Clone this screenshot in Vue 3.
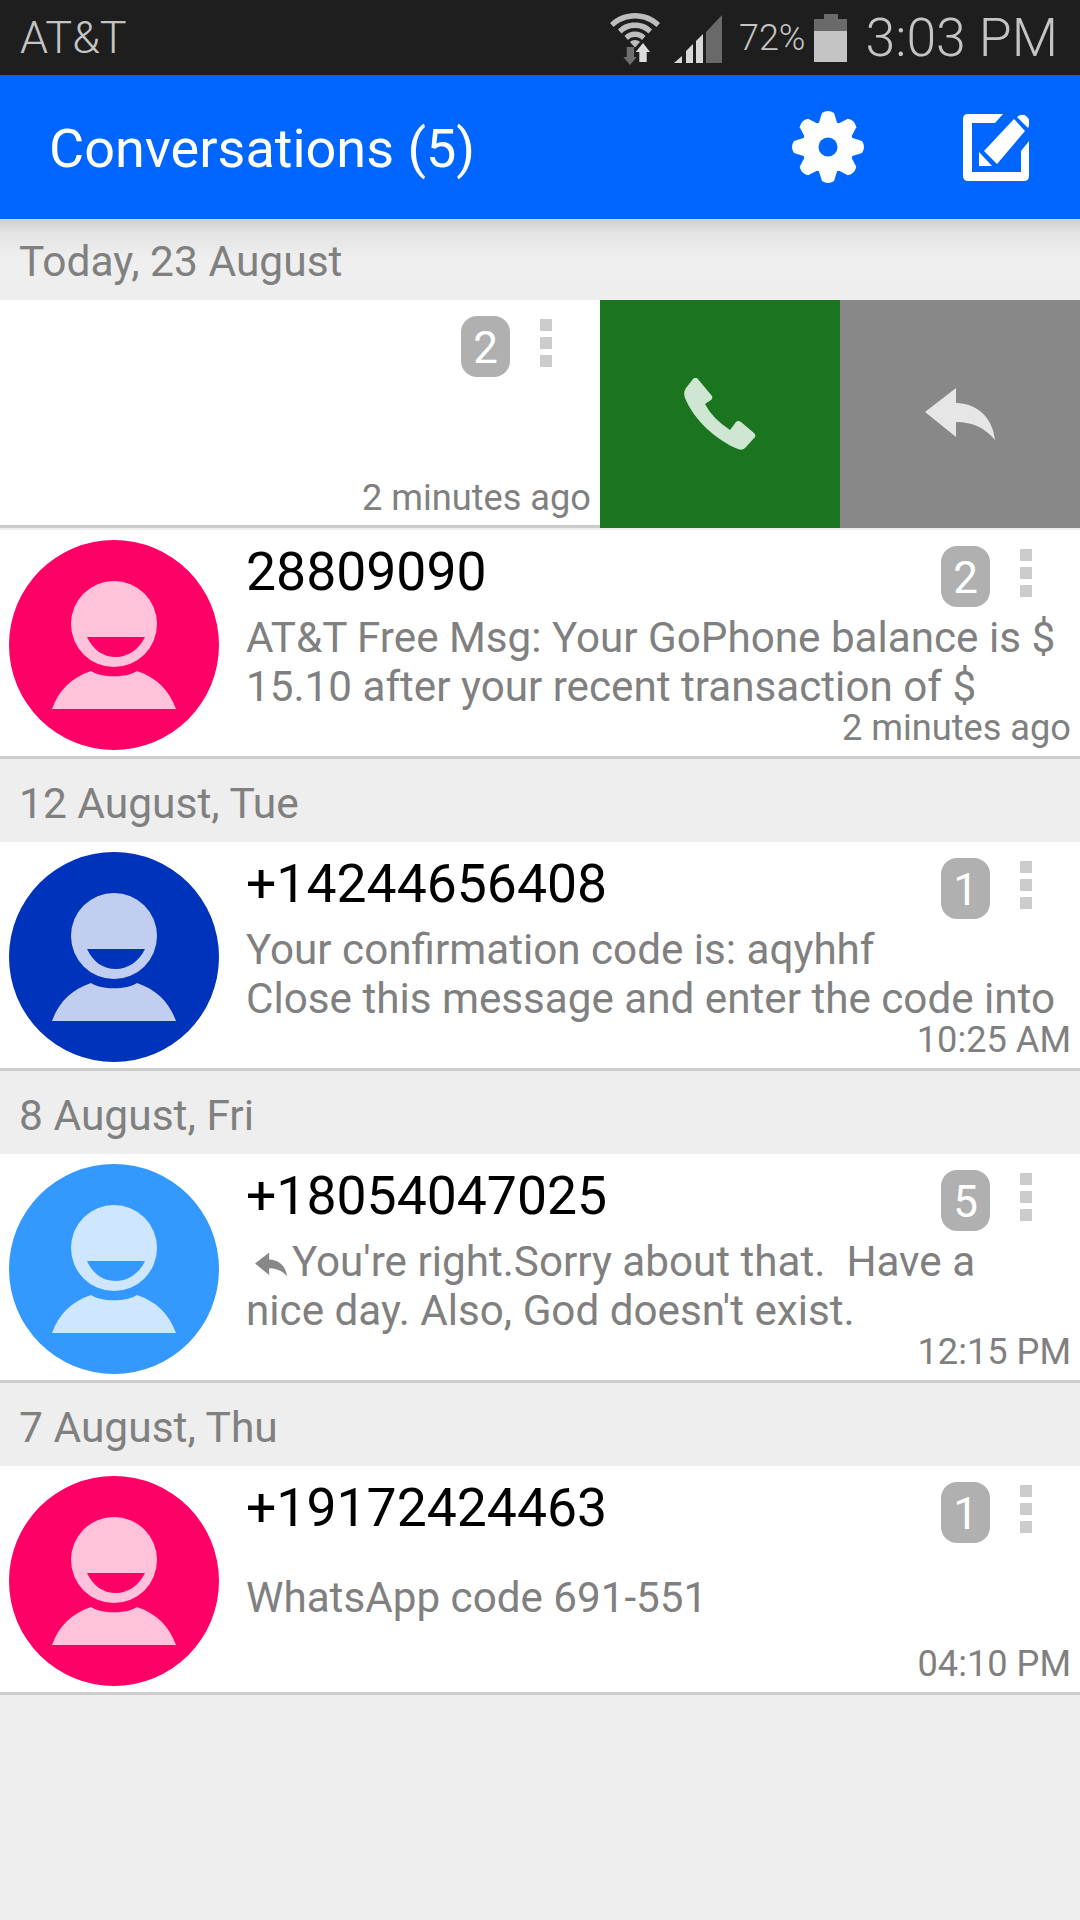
<template>
  <div class="screen">
    <!-- status bar -->
    <div class="status-bar">
      <span class="carrier">AT&amp;T</span>
      <div class="status-right">
        <svg class="wifi" viewBox="0 0 50 52" width="50" height="52">
          <path d="M25 0C15.500 0 6.500 3.500 0 10l3.500 4C9 9 16.500 5.500 25 5.500S41 9 46.500 14l3.500-4C43.500 3.500 34.500 0 25 0Z" fill="#bdbdbd" />
          <path d="M25 9.500C18 9.500 12 12 8 16.500l3.500 4C15 17 19.500 15 25 15s10 2 13.500 5.500l3.500-4C38 12 32 9.500 25 9.500Z" fill="#bdbdbd" />
          <path d="M25 18.500C20.500 18.500 17 20 14.500 23l3.500 4c1.500-2 4-3 7-3s5.500 1 7 3l3.500-4C33 20 29.500 18.500 25 18.500Z" fill="#bdbdbd" />
          <path d="M25 27c-2 0-4 .700-5 2l5 5.500 5-5.500c-1-1.300-3-2-5-2Z" fill="#bdbdbd" />
          <path d="M16.700 34H24V44H26.700L20 52L13.300 44H16.700Z" fill="#6e6e6e" />
          <path d="M33 30L40 39H36.700V49H29.300V39H25.700Z" fill="#dcdcdc" />
        </svg>
        <svg class="signal" viewBox="0 0 48 48" width="48" height="48">
          <polygon points="0,48 8,41 8,48" fill="#d8d8d8" />
          <polygon points="12,36 19,29 19,48 12,48" fill="#d8d8d8" />
          <polygon points="22,26 29,19 29,48 22,48" fill="#d8d8d8" />
          <polygon points="32,17 48,0 48,48 32,48" fill="#696969" />
        </svg>
        <span class="battery-text">72%</span>
        <div class="battery">
          <div class="battery-cap"></div>
          <div class="battery-empty"></div>
          <div class="battery-full"></div>
        </div>
        <span class="clock">3:03 PM</span>
      </div>
    </div>

    <!-- app bar -->
    <div class="app-bar">
      <span class="title">Conversations (5)</span>
      <svg class="gear" viewBox="0 0 72 72" width="72" height="72">
        <path
          v-for="a in gearTeeth"
          :key="a"
          d="M30 2Q36 -2 42 2L47 18H25Z"
          fill="#fff"
          :transform="`rotate(${a} 36 36)`"
        />
        <circle cx="36" cy="36" r="26" fill="#fff" />
        <circle cx="36" cy="36" r="9.500" fill="#0066ff" />
      </svg>
      <svg class="compose" viewBox="0 0 66 67" width="66" height="67">
        <path d="M5 0H40L32 9H9V58H58V37L66 27V62Q66 67 61 67H5Q0 67 0 62V5Q0 0 5 0Z" fill="#fff" />
        <path d="M21 37L51 5L62 17L34 50Z" fill="#fff" />
        <path d="M54 3Q59 -1 63 2L65 4Q68 8 65 14Z" fill="#fff" />
        <path d="M16 38L29 52H16Z" fill="#fff" />
      </svg>
    </div>

    <!-- list -->
    <div class="list">
      <template v-for="(section, i) in sections" :key="section.day">
        <div class="day" :class="{ first: i === 0 }">{{ section.day }}</div>

        <div v-if="section.swiped" class="row swiped">
          <div class="row-main">
            <div class="content">
              <div class="top">
                <span class="name"></span>
                <span class="badge">{{ section.swiped.count }}</span>
                <span class="dots"><i></i><i></i><i></i></span>
              </div>
              <div class="msg"></div>
              <div class="time">{{ section.swiped.time }}</div>
            </div>
          </div>
          <div class="action call">
            <svg viewBox="0 0 72 72" width="72" height="72">
              <path d="M13 0L28 18Q29 21 27 22L21 26Q28 40 46 52L52 44Q54 42 57 44L70 55Q72 57 71 59L62 69Q59 73 54 71C32 62 10 42 1 20Q-1 14 2 10L9 1Q11 -1 13 0Z" fill="#cfe6d3" />
            </svg>
          </div>
          <div class="action reply">
            <svg viewBox="0 0 70 52" width="70" height="52">
              <path d="M0 24L31 0V15C52 15 68 30 70 52C60 40 48 34 31 34V49Z" fill="#e6e6e6" />
            </svg>
          </div>
        </div>
        <div v-if="section.swiped" class="gap"></div>

        <div v-for="item in section.items" :key="item.name" class="row">
          <div class="row-main">
            <svg class="avatar" viewBox="0 0 210 210" width="210" height="210">
              <circle cx="105" cy="105" r="105" :fill="item.color" />
              <circle cx="105" cy="84" r="43" fill="#fff" fill-opacity="0.76" />
              <path d="M78 97H136C130 110 118 117 107 117C94 117 84 110 78 97Z" :fill="item.color" />
              <path d="M43 169C50 150 62 138 82 131C92 138 118 138 128 131C148 138 160 150 167 169Z" fill="#fff" fill-opacity="0.76" />
            </svg>
            <div class="content">
              <div class="top">
                <span class="name">{{ item.name }}</span>
                <span class="badge">{{ item.count }}</span>
                <span class="dots"><i></i><i></i><i></i></span>
              </div>
              <div class="msg">
                <div v-for="(line, n) in item.lines" :key="n" class="line">
                  <svg v-if="item.replied && n === 0" class="mini-reply" viewBox="0 0 70 52" width="32" height="27">
                    <path d="M0 24L31 0V15C52 15 68 30 70 52C60 40 48 34 31 34V49Z" fill="#888" />
                  </svg>{{ line }}
                </div>
              </div>
              <div class="time">{{ item.time }}</div>
            </div>
          </div>
        </div>
      </template>
    </div>
  </div>
</template>

<script setup>
const gearTeeth = [0, 45, 90, 135, 180, 225, 270, 315];

const sections = [
  {
    day: "Today, 23 August",
    swiped: { count: 2, time: "2 minutes ago" },
    items: [
      {
        name: "28809090",
        count: 2,
        color: "#ff0066",
        time: "2 minutes ago",
        lines: ["AT&T Free Msg: Your GoPhone balance is $", "15.10 after your recent transaction of $"]
      }
    ]
  },
  {
    day: "12 August, Tue",
    items: [
      {
        name: "+14244656408",
        count: 1,
        color: "#0033bb",
        time: "10:25 AM",
        lines: ["Your confirmation code is: aqyhhf", "Close this message and enter the code into"]
      }
    ]
  },
  {
    day: "8 August, Fri",
    items: [
      {
        name: "+18054047025",
        count: 5,
        color: "#3399ff",
        time: "12:15 PM",
        replied: true,
        lines: ["You're right.Sorry about that.  Have a", "nice day. Also, God doesn't exist."]
      }
    ]
  },
  {
    day: "7 August, Thu",
    items: [
      {
        name: "+19172424463",
        count: 1,
        color: "#ff0066",
        time: "04:10 PM",
        lines: ["WhatsApp code 691-551"]
      }
    ]
  }
];
</script>

<style>
html,
body {
  margin: 0;
  background: #eeeeee;
}
</style>

<style scoped>
.screen {
  width: 1080px;
  height: 1920px;
  background: #eeeeee;
  font-family: Roboto, "Liberation Sans", sans-serif;
  overflow: hidden;
}

/* status bar */
.status-bar {
  height: 75px;
  box-sizing: border-box;
  background: #1e1e1e;
  display: flex;
  align-items: center;
  justify-content: space-between;
  padding: 0 22px 0 20px;
  color: #c4c4c4;
  font-weight: 300;
}

.carrier {
  font-size: 45px;
}

.status-right {
  display: flex;
  align-items: center;
}

.wifi {
  margin-top: 2px;
}

.signal {
  margin-left: 14px;
  margin-top: 2px;
}

.battery-text {
  font-size: 36px;
  margin-left: 17px;
}

.battery {
  width: 33px;
  height: 48px;
  margin-left: 9px;
  display: flex;
  flex-direction: column;
  align-items: center;
}

.battery-cap {
  width: 14px;
  height: 5px;
  background: #6a6a6a;
}

.battery-empty {
  width: 33px;
  height: 12px;
  background: #6a6a6a;
}

.battery-full {
  width: 33px;
  flex: 1;
  background: #c4c4c4;
}

.clock {
  font-size: 53.500px;
  margin-left: 18px;
}

/* app bar */
.app-bar {
  height: 144px;
  box-sizing: border-box;
  background: #0066ff;
  display: flex;
  align-items: center;
  padding: 0 51px 0 49px;
}

.title {
  flex: 1;
  color: #fff;
  font-size: 54px;
  padding-top: 2px;
}

.compose {
  margin-left: 99px;
}

/* list */
.day {
  height: 83px;
  box-sizing: border-box;
  padding: 6px 0 0 19px;
  line-height: 77px;
  font-size: 42.500px;
  color: #808080;
}

.day.first {
  height: 81px;
  padding-top: 4px;
  background: linear-gradient(#cfcfcf 0, #e4e4e4 14px, #efefef 40px, #eeeeee 100%);
}

.row {
  display: flex;
  height: 229px;
  background: #fff;
}

.row.swiped {
  height: 228px;
}

.gap {
  height: 2px;
}

.row-main {
  flex: 1;
  min-width: 0;
  box-sizing: border-box;
  display: flex;
  border-bottom: 3px solid #cccccc;
}

.avatar {
  flex: none;
  margin: 10px 27px 0 9px;
}

.content {
  flex: 1;
  min-width: 0;
  display: flex;
  flex-direction: column;
  padding-right: 9px;
}

.top {
  height: 84px;
  display: flex;
  align-items: flex-start;
  padding-right: 39px;
}

.name {
  flex: 1;
  font-size: 53.500px;
  line-height: 84px;
  color: #000;
}

.badge {
  width: 49px;
  height: 61px;
  margin-top: 16px;
  border-radius: 16px;
  background: #b0b0b0;
  color: #fff;
  font-size: 44px;
  line-height: 64px;
  text-align: center;
}

.dots {
  width: 12px;
  margin: 19px 0 0 30px;
  display: flex;
  flex-direction: column;
  gap: 6px;
}

.dots i {
  display: block;
  height: 12px;
  background: #cccccc;
}

.msg {
  height: 95px;
  display: flex;
  flex-direction: column;
  justify-content: center;
  font-size: 42.200px;
  line-height: 49px;
  color: #808080;
  white-space: pre;
}

.mini-reply {
  margin: 0 5px -2px 9px;
}

.time {
  font-size: 36.200px;
  line-height: 38px;
  text-align: right;
  color: #808080;
}

.action {
  flex: none;
  width: 240px;
  display: flex;
  align-items: center;
  justify-content: center;
}

.call {
  background: #1b751f;
}

.reply {
  background: #888888;
}
</style>
